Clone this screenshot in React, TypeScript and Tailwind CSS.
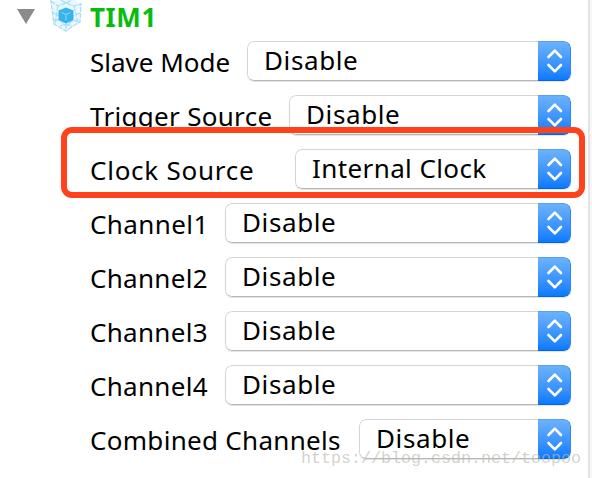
import React from 'react';

interface Setting {
  label: string;
  value: string;
  labelClass: string;
  textClass: string;
  valueClass: string;
}

const settings: Setting[] = [
  { label: 'Slave Mode', value: 'Disable', labelClass: 'w-[157px]', textClass: 'tracking-[0px]', valueClass: 'tracking-[0.6px]' },
  { label: 'Trigger Source', value: 'Disable', labelClass: 'w-[199px]', textClass: 'tracking-[0.3px]', valueClass: 'tracking-[0.6px]' },
  { label: 'Clock Source', value: 'Internal Clock', labelClass: 'w-[205px]', textClass: 'tracking-[0.75px]', valueClass: 'tracking-[0.4px]' },
  { label: 'Channel1', value: 'Disable', labelClass: 'w-[135px]', textClass: 'tracking-[0.4px]', valueClass: 'tracking-[0.6px]' },
  { label: 'Channel2', value: 'Disable', labelClass: 'w-[135px]', textClass: 'tracking-[0.3px]', valueClass: 'tracking-[0.6px]' },
  { label: 'Channel3', value: 'Disable', labelClass: 'w-[135px]', textClass: 'tracking-[0.3px]', valueClass: 'tracking-[0.6px]' },
  { label: 'Channel4', value: 'Disable', labelClass: 'w-[135px]', textClass: 'tracking-[0.3px]', valueClass: 'tracking-[0.6px]' },
  { label: 'Combined Channels', value: 'Disable', labelClass: 'w-[269px]', textClass: 'tracking-[0.3px]', valueClass: 'tracking-[0.6px]' },
];

const CubeIcon: React.FC = () => (
  <svg width="32" height="32" viewBox="0 0 32 32" fill="none" className="shrink-0">
    <path d="M1 1 L9 0 H24 L31 4 L30 22 L16 31 L4 24 Z" fill="#eaf8fe" />
    <path
      d="M1 1 L8 6 L16 3 L24 6 L31 4 L30 22 L23 26 L16 31 L4 24 Z M11 0 L16 3 L22 0 M8 6 L5 24 M24 6 L28 23 M2 12 L9 16 M30 13 L23 16 M4 20 L10 20 L16 26 L22 21 L30 20 M16 24 V31 M10 26 L16 24 L22 26"
      stroke="#a9def6"
      strokeWidth="1.3"
      strokeDasharray="5 1"
    />
    <path d="M8.5 10.5 L16 7.5 L23.5 10.5 V20 L16 23.5 L8.5 20 Z" fill="#35b3ea" />
    <path d="M11.5 12.5 L16 14.5 L20.5 12.5 M16 14.5 V20" stroke="#7fd0f3" strokeWidth="1.2" />
  </svg>
);

const Dropdown: React.FC<{ value: string; className: string }> = ({ value, className }) => (
  <button
    type="button"
    className="flex h-10 flex-1 overflow-hidden rounded-[7px] bg-white text-left shadow-[0_1px_1px_#e4e4e4]"
  >
    <span className="h-full flex-1 rounded-l-[7px] border border-r-0 border-[#d4d4d4] border-b-[#b5b5b5] pl-4">
      <span className={`block whitespace-nowrap leading-[36px] ${className}`}>{value}</span>
    </span>
    <span className="flex h-full w-[33px] items-center justify-center rounded-r-[7px] border-y border-r border-t-[#5b9fe8] border-r-[#2f87f5] border-b-[#0560f5] bg-linear-to-b from-[#6bb2fb] to-[#057aff]">
      <svg width="17" height="26" viewBox="0 0 17 26" fill="none" stroke="white" strokeWidth="2.6" strokeLinecap="round" strokeLinejoin="round">
        <path d="M2.5 9 L8.8 2.7 L15 9 M2.5 17 L8.8 23.3 L15 17" />
      </svg>
    </span>
  </button>
);

const App: React.FC = () => {
  return (
    <div className="relative flex h-[478px] w-[592px] overflow-hidden bg-white font-['Noto_Sans',sans-serif] text-[26px] text-black">
      <div className="w-[571px]">
        {/* Tree node */}
        <div className="flex h-[41px] items-start pl-[17px]">
          <svg width="18" height="15" viewBox="0 0 18 15" className="mt-[9px] shrink-0">
            <path d="M0 0 H18 L9 15 Z" fill="#8b8b8b" />
          </svg>
          <div className="ml-[15px]">
            <CubeIcon />
          </div>
          <h1 className="ml-[8px] text-[26px] leading-[34px] font-bold tracking-[0.6px] text-[#07bd0b]">TIM1</h1>
        </div>

        {/* Timer settings */}
        <div className="flex flex-col gap-[14px] pl-[90px]">
          {settings.map((item) => (
            <div key={item.label} className="flex h-10">
              <label className={`shrink-0 leading-[42px] whitespace-nowrap ${item.labelClass} ${item.textClass}`}>
                {item.label}
              </label>
              <Dropdown value={item.value} className={item.valueClass} />
            </div>
          ))}
        </div>
      </div>

      <div className="ml-auto w-1 border-l-2 border-[#e4e4e4] bg-[#f7f7f7]" />

      {/* Highlight around the clock source */}
      <div className="pointer-events-none absolute top-[127px] left-[61px] h-[71px] w-[524px] rounded-[11px] border-6 border-[#ff421c]" />

      <span className="pointer-events-none absolute top-[447px] left-[301px] font-['Liberation_Mono',monospace] text-[16.67px] leading-6 whitespace-nowrap text-[#b9b9b0]/65">
        https://blog.csdn.net/toopoo
      </span>
    </div>
  );
};

export default App;
